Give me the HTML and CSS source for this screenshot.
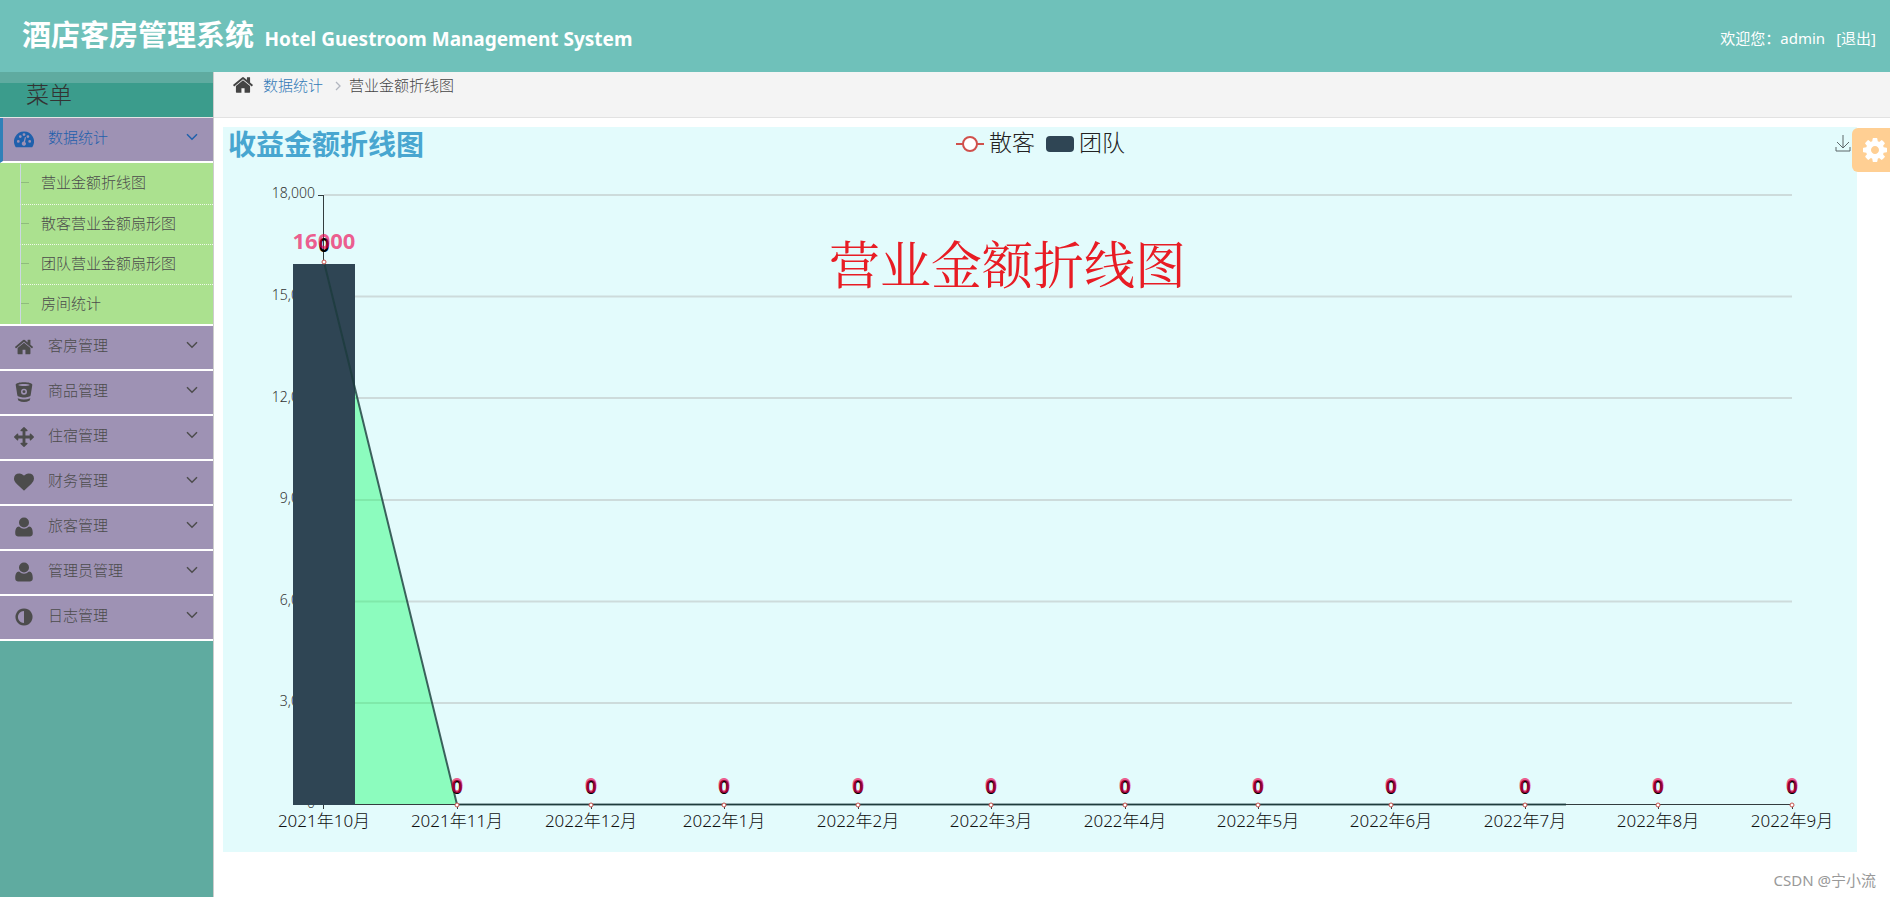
FILE: index.html
```html
<!DOCTYPE html>
<html lang="zh-CN">
<head>
<meta charset="utf-8">
<title>酒店客房管理系统</title>
<link rel="stylesheet" href="styles.css">
</head>
<body>
<svg class="sprite" aria-hidden="true">
  <symbol id="home" viewBox="0 0 1792 1792"><path d="M1472 992v480q0 26-19 45t-45 19h-384v-384h-256v384h-384q-26 0-45-19t-19-45v-480q0-1 .5-3t.5-3l575-474 575 474q1 2 1 6zm223-69l-62 74q-8 9-21 11h-3q-13 0-21-7l-692-577-692 577q-12 8-24 7-13-2-21-11l-62-74q-8-10-7-23.5t11-21.5l719-599q32-26 76-26t76 26l244 204v-195q0-14 9-23t23-9h192q14 0 23 9t9 23v408l219 182q10 8 11 21.5t-7 23.5z"/></symbol>
  <symbol id="gauge" viewBox="0 0 20 20"><path fill-rule="evenodd" d="M10 2.5A10 10 0 0 0 1.6 17.9Q1.9 18.300 2.500 18.300H17.500Q18.100 18.300 18.400 17.900A10 10 0 0 0 10 2.500ZM4.300 11a1.400 1.400 0 1 0 0 2.800 1.400 1.400 0 0 0 0-2.800ZM6.300 6.200a1.400 1.400 0 1 0 0 2.800 1.400 1.400 0 0 0 0-2.800ZM10 4.200A1.400 1.400 0 1 0 10 7a1.400 1.400 0 0 0 0-2.800ZM13.900 6.200a1.400 1.400 0 1 0 0 2.800 1.400 1.400 0 0 0 0-2.800ZM15.700 11a1.400 1.400 0 1 0 0 2.800 1.400 1.400 0 0 0 0-2.800ZM10.900 8L9.700 12.600A2.100 2.100 0 1 0 11 12.900L12 8.300Z"/></symbol>
  <symbol id="bucket" viewBox="0 0 18 18"><path fill-rule="evenodd" d="M1.500 2.500C1.500 1 5 .2 9 .2s7.500.8 7.500 2.300L15 12c-.2 1.200-3 2-6 2s-5.800-.8-6-2ZM3.800 2.800C5 4 13 4 14.200 2.800 13 1.600 5 1.600 3.800 2.800ZM9 6a2.700 2.700 0 1 0 0 5.400A2.700 2.700 0 0 0 9 6Z"/><circle cx="9" cy="8.700" r="1.300"/><path d="M3.300 14.600q5.700 2.400 11.400 0l-.6 2q-5.100 2.800-10.200 0Z"/></symbol>
  <symbol id="move" viewBox="0 0 1792 1792"><path d="M1792 896q0 26-19 45l-256 256q-19 19-45 19t-45-19-19-45v-128h-384v384h128q26 0 45 19t19 45-19 45l-256 256q-19 19-45 19t-45-19l-256-256q-19-19-19-45t19-45 45-19h128v-384h-384v128q0 26-19 45t-45 19-45-19l-256-256q-19-19-19-45t19-45l256-256q19-19 45-19t45 19 19 45v128h384v-384h-128q-26 0-45-19t-19-45 19-45l256-256q19-19 45-19t45 19l256 256q19 19 19 45t-19 45-45 19h-128v384h384v-128q0-26 19-45t45-19 45 19l256 256q19 19 19 45z"/></symbol>
  <symbol id="heart" viewBox="0 0 1792 1792"><path d="M896 1664q-26 0-44-18l-624-602q-10-8-27.500-26t-55.500-65.500-68-97.500-53.500-121-23.500-138q0-220 127-344t351-124q62 0 126.500 21.500t120 58 95.500 68.500 76 68q36-36 76-68t95.500-68.500 120-58 126.500-21.500q224 0 351 124t127 344q0 221-229 450l-623 600q-18 18-44 18z"/></symbol>
  <symbol id="user" viewBox="0 0 18 18"><circle cx="9" cy="5" r="4.500"/><path d="M4.500 8.500Q9 12.600 13.500 8.500C16 8.700 16.900 11 16.900 14.500Q16.900 17.500 14.500 17.500H3.500Q1.100 17.500 1.100 14.500C1.100 11 2 8.700 4.500 8.500Z"/></symbol>
  <symbol id="contrast" viewBox="0 0 1792 1792"><path d="M896 1440v-1088q-148 0-273 73t-198 198-73 273 73 273 198 198 273 73zm768-544q0 209-103 385.500t-279.500 279.500-385.500 103-385.500-103-279.500-279.500-103-385.500 103-385.500 279.500-279.500 385.500-103 385.500 103 279.500 279.500 103 385.500z"/></symbol>
  <symbol id="cog" viewBox="0 0 1792 1792"><path d="M1152 896q0-106-75-181t-181-75-181 75-75 181 75 181 181 75 181-75 75-181zm512-109v222q0 12-8 23t-20 13l-185 28q-19 54-39 91 35 50 107 138 10 12 10 25t-9 23q-27 37-99 108t-94 71q-12 0-26-9l-138-108q-44 23-91 38-16 136-29 186-7 28-36 28h-222q-14 0-24.500-8.500t-11.500-21.500l-28-184q-49-16-90-37l-141 107q-10 9-25 9-14 0-25-11-126-114-165-168-7-10-7-23 0-12 8-23 15-21 51-66.500t54-70.500q-27-50-41-99l-183-27q-13-2-21-12.500t-8-23.500v-222q0-12 8-23t19-13l186-28q14-46 39-92-40-57-107-138-10-12-10-24 0-10 9-23 26-36 98.500-107.500t94.500-71.500q13 0 26 10l138 107q44-23 91-38 16-136 29-186 7-28 36-28h222q14 0 24.500 8.500t11.500 21.500l28 184q49 16 90 37l142-107q9-9 24-9 13 0 25 10 129 119 165 170 7 8 7 22 0 12-8 23-15 21-51 66.500t-54 70.500q26 50 41 98l183 28q13 2 21 12.500t8 23.500z"/></symbol>
  <symbol id="down" viewBox="0 0 12 8"><path d="M1 1.200L6 6.200L11 1.200" fill="none" stroke="currentColor" stroke-width="1.500"/></symbol>
</svg>

<header class="topbar">
  <h1 class="brand">酒店客房管理系统 <small class="brand-en">Hotel Guestroom Management System</small></h1>
  <div class="account"><span>欢迎您：admin</span><a class="logout" href="#">[退出]</a></div>
</header>

<div class="layout">
  <aside class="sidebar">
    <h2 class="menu-title">菜单</h2>
    <nav>
      <ul class="menu">
        <li>
          <button class="menu-row active" type="button"><svg class="icon"><use href="#gauge"/></svg><span>数据统计</span><svg class="caret"><use href="#down"/></svg></button>
          <ul class="submenu">
            <li><a class="sub-link" href="#">营业金额折线图</a></li>
            <li><a class="sub-link" href="#">散客营业金额扇形图</a></li>
            <li><a class="sub-link" href="#">团队营业金额扇形图</a></li>
            <li><a class="sub-link" href="#">房间统计</a></li>
          </ul>
        </li>
        <li><button class="menu-row" type="button"><svg class="icon"><use href="#home"/></svg><span>客房管理</span><svg class="caret"><use href="#down"/></svg></button></li>
        <li><button class="menu-row" type="button"><svg class="icon"><use href="#bucket"/></svg><span>商品管理</span><svg class="caret"><use href="#down"/></svg></button></li>
        <li><button class="menu-row" type="button"><svg class="icon"><use href="#move"/></svg><span>住宿管理</span><svg class="caret"><use href="#down"/></svg></button></li>
        <li><button class="menu-row" type="button"><svg class="icon"><use href="#heart"/></svg><span>财务管理</span><svg class="caret"><use href="#down"/></svg></button></li>
        <li><button class="menu-row" type="button"><svg class="icon"><use href="#user"/></svg><span>旅客管理</span><svg class="caret"><use href="#down"/></svg></button></li>
        <li><button class="menu-row" type="button"><svg class="icon"><use href="#user"/></svg><span>管理员管理</span><svg class="caret"><use href="#down"/></svg></button></li>
        <li><button class="menu-row" type="button"><svg class="icon"><use href="#contrast"/></svg><span>日志管理</span><svg class="caret"><use href="#down"/></svg></button></li>
      </ul>
    </nav>
  </aside>

  <main class="main">
    <nav class="crumbs" aria-label="breadcrumb">
      <svg class="crumb-home"><use href="#home"/></svg>
      <a class="crumb-link" href="#">数据统计</a>
      <svg class="crumb-sep" viewBox="0 0 6 10"><path d="M1 1L5 5L1 9" fill="none" stroke="currentColor" stroke-width="1.300"/></svg>
      <span>营业金额折线图</span>
    </nav>

    <section class="panel">
      <svg class="chart" viewBox="0 0 1634 725" role="img" aria-label="收益金额折线图">
        <text class="chart-title" x="5" y="28">收益金额折线图</text>
        <g class="legend">
          <path class="legend-line" d="M733 17H761"/>
          <circle class="legend-dot" cx="747" cy="17" r="7"/>
          <text x="766" y="24">散客</text>
          <rect class="bar" x="823" y="9" width="28" height="16" rx="4"/>
          <text x="856" y="24">团队</text>
        </g>
        <path class="grid" d="M101 68H1569M101 169.500H1569M101 271H1569M101 373H1569M101 474.500H1569M101 576H1569"/>
        <g class="y-labels">
          <text x="92" y="71">18,000</text>
          <text x="92" y="173">15,000</text>
          <text x="92" y="275">12,000</text>
          <text x="92" y="376">9,000</text>
          <text x="92" y="478">6,000</text>
          <text x="92" y="579">3,000</text>
          <text x="92" y="681">0</text>
        </g>
        <path class="area" d="M101 135L234 677H101Z"/>
        <path class="axis" d="M95 68.500H101M100.500 68V682M101 677.500H1569M234.500 677V682M368.500 677V682M501.500 677V682M635.500 677V682M768.500 677V682M902.500 677V682M1035.500 677V682M1168.500 677V682M1302.500 677V682M1435.500 677V682M1569.500 677V682"/>
        <rect class="bar" x="70" y="137" width="62" height="541"/>
        <path class="series" d="M101 135L234 677.500H1343"/>
        <g class="marks">
          <circle cx="101" cy="135" r="2"/><circle cx="234" cy="678" r="2"/><circle cx="368" cy="678" r="2"/><circle cx="501" cy="678" r="2"/><circle cx="635" cy="678" r="2"/><circle cx="768" cy="678" r="2"/><circle cx="902" cy="678" r="2"/><circle cx="1035" cy="678" r="2"/><circle cx="1168" cy="678" r="2"/><circle cx="1302" cy="678" r="2"/><circle cx="1435" cy="678" r="2"/><circle cx="1569" cy="678" r="2"/>
        </g>
        <g class="values-team">
          <text x="101" y="125">0</text><text x="234" y="667">0</text><text x="368" y="667">0</text><text x="501" y="667">0</text><text x="635" y="667">0</text><text x="768" y="667">0</text><text x="902" y="667">0</text><text x="1035" y="667">0</text><text x="1168" y="667">0</text><text x="1302" y="667">0</text><text x="1435" y="667">0</text><text x="1569" y="667">0</text>
        </g>
        <g class="values-guest">
          <text x="101" y="122">16000</text><text x="234" y="666">0</text><text x="368" y="666">0</text><text x="501" y="666">0</text><text x="635" y="666">0</text><text x="768" y="666">0</text><text x="902" y="666">0</text><text x="1035" y="666">0</text><text x="1168" y="666">0</text><text x="1302" y="666">0</text><text x="1435" y="666">0</text><text x="1569" y="666">0</text>
        </g>
        <g class="x-labels">
          <text x="101" y="700">2021年10月</text><text x="234" y="700">2021年11月</text><text x="368" y="700">2022年12月</text><text x="501" y="700">2022年1月</text><text x="635" y="700">2022年2月</text><text x="768" y="700">2022年3月</text><text x="902" y="700">2022年4月</text><text x="1035" y="700">2022年5月</text><text x="1168" y="700">2022年6月</text><text x="1302" y="700">2022年7月</text><text x="1435" y="700">2022年8月</text><text x="1569" y="700">2022年9月</text>
        </g>
        <text class="note" x="606" y="157">营业金额折线图</text>
      </svg>
      <button class="save" type="button" aria-label="保存为图片"><svg class="save-icon" viewBox="0 0 16 18"><path d="M8 1V14M2 8L8 14L14 8M1 13V17H15V13" fill="none" stroke="currentColor"/></svg></button>
    </section>
    <button class="settings" type="button" aria-label="设置"><svg class="settings-icon"><use href="#cog"/></svg></button>
    <footer class="credit">CSDN @宁小流</footer>
  </main>
</div>
</body>
</html>
```
FILE: styles.css
```css
* { box-sizing: border-box; }

body {
  margin: 0;
  min-height: 100vh;
  display: flex;
  flex-direction: column;
  background: #fff;
  color: #444;
  font: 300 15px/20px "Noto Sans", "Noto Sans CJK SC", sans-serif;
}

ul { list-style: none; margin: 0; padding: 0; }
a { text-decoration: none; color: inherit; }
button { font: inherit; color: inherit; border: 0; margin: 0; cursor: pointer; }
svg { fill: currentColor; }
.sprite { position: absolute; width: 0; height: 0; }

.topbar {
  display: flex;
  justify-content: space-between;
  align-items: center;
  height: 72px;
  padding: 0 14px 0 22px;
  background: #6fc1ba;
  color: #fff;
}
.brand { margin: 0; padding-top: 2px; font-size: 29px; line-height: 40px; font-weight: 700; }
.brand-en { margin-left: 3px; font-size: 19px; }
.account { display: flex; gap: 11px; padding-top: 4px; font-weight: 400; }

.layout { flex: 1; display: flex; }

.sidebar {
  width: 214px;
  flex: none;
  border-right: 1px solid #ccc;
  background: #5faba0;
}
.menu-title {
  margin: 11px 0 0;
  height: 34px;
  padding-left: 26px;
  background: #3b9c8c;
  color: #333;
  font-size: 23px;
  line-height: 22px;
  font-weight: 300;
}
.menu { border-top: 1px solid #e5e5e5; }
.menu-row {
  display: flex;
  align-items: center;
  width: 100%;
  height: 45px;
  padding: 0 15px 6px 14px;
  border-bottom: 2px solid #fff;
  background: #9e92b4;
  color: #4c4c4c;
  text-align: left;
}
.menu-row span { flex: 1; padding-left: 14px; }
.menu-row.active {
  padding-left: 11px;
  border-left: 3px solid #2f80b8;
  color: #1f60ac;
}
.icon { width: 20px; height: 20px; margin-top: 4px; }
.caret { width: 12px; height: 8px; }

.submenu {
  padding: 1px 0 0 20px;
  border-bottom: 2px solid #fff;
  background: #abe18f;
}
.submenu li { height: 40px; border-left: 1px solid #ccd7e2; }
.submenu li + li { border-top: 1px dotted #f0faea; }
.sub-link {
  display: flex;
  align-items: center;
  height: 36px;
  color: #4c4c4c;
}
.sub-link::before {
  content: "";
  width: 8px;
  margin-right: 12px;
  border-top: 1px solid #8fbc7c;
}

.main { flex: 1; min-width: 0; position: relative; }
.crumbs {
  display: flex;
  align-items: center;
  height: 46px;
  padding: 0 18px 20px;
  border-bottom: 1px solid #e2e2e2;
  background: #f4f4f4;
}
.crumb-home { width: 22px; height: 22px; }
.crumb-link { margin-left: 9px; color: #337ab7; }
.crumb-sep { width: 6px; height: 10px; margin: 2px 8px 0 12px; color: #b2b6bf; }

.panel {
  position: relative;
  margin: 9px 33px 0 9px;
  background: #e3fbfc;
}
.chart { display: block; width: 100%; height: auto; overflow: visible; }
.chart-title { font-size: 28px; font-weight: 700; fill: #48a6d0; }
.legend { font-size: 23px; fill: #222; }
.legend-line { stroke: #d0504c; stroke-width: 2; }
.legend-dot { fill: #fff; stroke: #d0504c; stroke-width: 2; }
.grid { fill: none; stroke: #cddbdb; stroke-width: 2; }
.axis { fill: none; stroke: #333c3e; stroke-width: 1; }
.y-labels { font-size: 14px; text-anchor: end; fill: #333; }
.x-labels { font-size: 17px; text-anchor: middle; fill: #111; }
.area { fill: #00ff59; fill-opacity: .38; }
.bar { fill: #2f4554; }
.series { fill: none; stroke: #1c3b3c; stroke-width: 2; stroke-opacity: .8; }
.marks { fill: #fff; stroke: #c8504c; stroke-width: 1; }
.values-team, .values-guest { font-size: 22px; font-weight: 700; text-anchor: middle; }
.values-team { font-family: "Liberation Sans", sans-serif; font-size: 20px; fill: #000; }
.values-guest { fill: #f00050; fill-opacity: .65; }
.note { font-family: "Noto Serif CJK SC", "Noto Serif SC", "SimSun", "Noto Sans CJK SC", serif; font-size: 51px; font-weight: 400; fill: #e81c24; }

.save {
  position: absolute;
  top: 7px;
  right: 6px;
  padding: 0;
  background: none;
  color: #5c6668;
}
.save-icon { display: block; width: 16px; height: 18px; }

.settings {
  position: absolute;
  top: 56px;
  right: 0;
  width: 38px;
  height: 44px;
  padding: 0 0 0 9px;
  border-radius: 6px 0 0 6px;
  background: #ffcf93;
  color: #fff;
}
.settings-icon { display: block; width: 28px; height: 28px; }

.credit {
  padding: 18px 14px 6px;
  text-align: right;
  font-weight: 400;
  color: #999;
}
```
